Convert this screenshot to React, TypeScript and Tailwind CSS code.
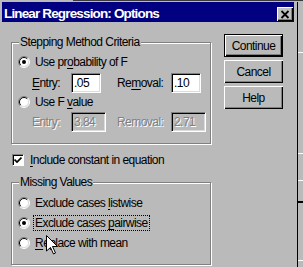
import React from "react";

const Radio = ({ checked }: { checked?: boolean }) => (
  <svg width="12" height="12" viewBox="0 0 12 12" className="shrink-0">
    <circle cx="6" cy="6" r="5" fill="#fff" />
    <path d="M9.9 2.1 A5.5 5.5 0 0 0 2.1 9.9" stroke="#808080" fill="none" />
    <path d="M9.2 2.8 A4.5 4.5 0 0 0 2.8 9.2" stroke="#000" fill="none" />
    <path d="M9.9 2.1 A5.5 5.5 0 0 1 2.1 9.9" stroke="#fff" fill="none" />
    <path d="M9.2 2.8 A4.5 4.5 0 0 1 2.8 9.2" stroke="#dcdcdc" fill="none" />
    {checked && <circle cx="6" cy="6" r="2" fill="#000" />}
  </svg>
);

const U = ({ children }: { children: React.ReactNode }) => (
  <span className="underline underline-offset-[2px] decoration-1">{children}</span>
);

const Field = ({ value, disabled, w }: { value: string; disabled?: boolean; w: string }) => (
  <div
    className={`${w} h-[20px] flex items-center pl-[2px] border border-t-[#808080] border-l-[#808080] border-r-white border-b-white shadow-[inset_1px_1px_0_#000,inset_-1px_-1px_0_#dcdcdc] ${
      disabled ? "bg-[#bababa] text-[#808080] [text-shadow:1px_1px_0_#fff]" : "bg-white text-black"
    }`}
  >
    {value}
  </div>
);

const Btn = ({ label, def }: { label: string; def?: boolean }) =>
  def ? (
    <div className="h-[23px] border border-black">
      <div className="h-full flex items-center justify-center shadow-[inset_1px_1px_0_#fff,inset_-1px_-1px_0_#000,inset_-2px_-2px_0_#808080]">
        {label}
      </div>
    </div>
  ) : (
    <div className="h-[23px] flex items-center justify-center shadow-[inset_1px_1px_0_#fff,inset_-1px_-1px_0_#000,inset_-2px_-2px_0_#808080]">
      {label}
    </div>
  );

export default function App() {
  return (
    <div className="w-[303px] h-[267px] overflow-hidden bg-[#bababa] font-['Liberation_Sans',Arial,sans-serif] text-[12px] leading-[16px] tracking-[-0.55px] text-black">
      <div className="h-[2px]">
        <div className="ml-[73px] h-px bg-[#3a3a3a]" />
      </div>
      <div className="flex">
        <div className="w-[298px] h-[265px] border-r border-black flex flex-col">
          {/* Title bar */}
          <div className="ml-[2px] w-[292px] h-[20px] bg-[#000080] flex items-start justify-between">
            <span className="pl-[2px] mt-[4px] text-white font-bold text-[13.5px] leading-[16px] tracking-[-0.85px]">
              Linear Regression: Options
            </span>
            <div className="mt-[5px] mr-[1px] w-[16px] h-[14px] bg-[#c0c0c0] shadow-[inset_1px_1px_0_#fff,inset_-1px_-1px_0_#000,inset_-2px_-2px_0_#808080] flex items-center justify-center">
              <svg width="10" height="9" viewBox="0 0 10 9">
                <path d="M1.5 1 L8.5 8 M8.5 1 L1.5 8" stroke="#000" strokeWidth="1.8" />
              </svg>
            </div>
          </div>

          {/* Body */}
          <div className="flex pl-[11px]">
            <div className="w-[200px] flex flex-col">
              <fieldset className="mt-[13px] h-[109px] border border-[#808080] shadow-[inset_1px_1px_0_#fff,1px_1px_0_#fff]">
                <legend className="ml-[7px] px-[1px] leading-[14px] bg-[#bababa]">Stepping Method Criteria</legend>
                <div className="flex flex-col">
                  <div className="mt-[5px] h-[16px] pl-[6px] flex items-center gap-[5px]">
                    <Radio checked />
                    <span>
                      Use pr<U>o</U>bability of F
                    </span>
                  </div>
                  <div className="mt-[3px] h-[20px] pl-[20px] flex items-center">
                    <span className="w-[39px]">
                      <U>E</U>ntry:
                    </span>
                    <Field value=".05" w="w-[30px]" />
                    <span className="ml-[16px] w-[54px]">
                      Re<U>m</U>oval:
                    </span>
                    <Field value=".10" w="w-[30px]" />
                  </div>
                  <div className="mt-[1px] h-[16px] pl-[6px] flex items-center gap-[5px]">
                    <Radio />
                    <span>
                      Use F <U>v</U>alue
                    </span>
                  </div>
                  <div className="mt-[2px] h-[20px] pl-[20px] flex items-center text-[#808080] [text-shadow:1px_1px_0_#fff]">
                    <span className="w-[39px]">Entry:</span>
                    <Field value="3.84" w="w-[35px]" disabled />
                    <span className="ml-[11px] w-[54px]">Removal:</span>
                    <Field value="2.71" w="w-[35px]" disabled />
                  </div>
                </div>
              </fieldset>

              <div className="mt-[8px] h-[16px] ml-[1px] flex items-center gap-[6px]">
                <div className="w-[12px] h-[12px] bg-white border border-t-[#808080] border-l-[#808080] border-r-white border-b-white shadow-[inset_1px_1px_0_#000] flex items-center justify-center">
                  <svg width="8" height="8" viewBox="0 0 8 8">
                    <path d="M0.5 3.5 L3 6 L7.5 1.5" stroke="#000" strokeWidth="1.7" fill="none" />
                  </svg>
                </div>
                <span>
                  <U>I</U>nclude constant in equation
                </span>
              </div>

              <fieldset className="relative mt-[7px] h-[90px] border border-[#808080] shadow-[inset_1px_1px_0_#fff,1px_1px_0_#fff]">
                <legend className="ml-[7px] px-[1px] leading-[14px] bg-[#bababa]">Missing Values</legend>
                <div className="flex flex-col">
                  <div className="mt-[6px] h-[16px] pl-[6px] flex items-center gap-[5px]">
                    <Radio />
                    <span>
                      Exclude cases <U>l</U>istwise
                    </span>
                  </div>
                  <div className="mt-[4px] h-[16px] pl-[6px] flex items-center gap-[5px]">
                    <Radio checked />
                    <span className="-ml-[2px] px-[1px] border border-dotted border-black leading-[14px]">
                      Exclude cases <U>p</U>airwise
                    </span>
                  </div>
                  <div className="mt-[4px] h-[16px] pl-[6px] flex items-center gap-[5px]">
                    <Radio />
                    <span>
                      <U>R</U>eplace with mean
                    </span>
                  </div>
                </div>
                <svg
                  className="absolute left-[34px] top-[46px]"
                  width="12"
                  height="20"
                  viewBox="0 0 12 20"
                >
                  <path d="M0.5 0.5 L0.5 16 L4.5 12.5 L7.5 19 L9.5 18 L6.5 11.5 L11.5 11.5 Z" fill="#fff" stroke="#000" />
                </svg>
              </fieldset>
            </div>

            <div className="ml-[13px] mt-[12px] w-[59px] flex flex-col gap-[3px]">
              <Btn label="Continue" def />
              <Btn label="Cancel" />
              <Btn label="Help" />
            </div>
          </div>
        </div>
        <div className="flex-1 flex flex-col">
          <div className="mt-[50px] h-px bg-white" />
          <div className="mt-[100px] h-px bg-white" />
          <div className="mt-[26px] h-px bg-white" />
          <div className="mt-[20px] h-[2px] bg-black" />
          <div className="mt-[57px] h-px bg-white" />
        </div>
      </div>
    </div>
  );
}
